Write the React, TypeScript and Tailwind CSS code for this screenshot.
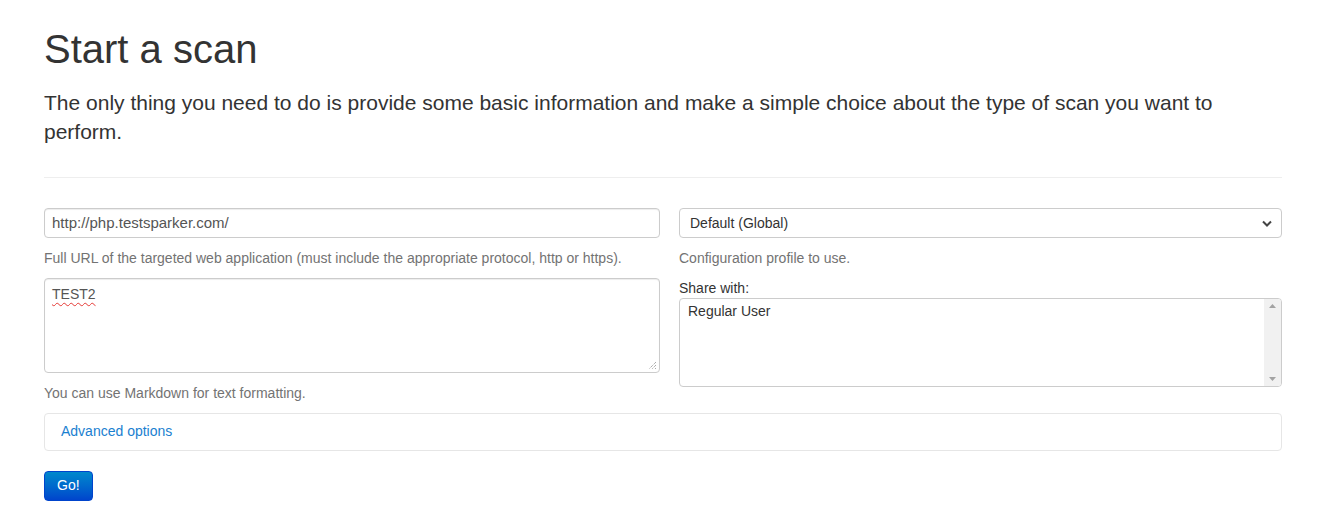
export default function App() {
  return (
    <div className="min-h-[505px] bg-white font-['Liberation_Sans',Arial,sans-serif] text-[#333]">
      <div className="w-[1238px] ml-[44px] pt-[27px]">
        <h1 className="text-[40px] leading-[1.1] font-normal">Start a scan</h1>
        <p className="mt-[17px] text-[21px] leading-[1.4] font-light">
          The only thing you need to do is provide some basic information and make a simple choice about the type of scan you want to perform.
        </p>
        <hr className="mt-[30px] border-0 border-t border-[#eee]" />

        <div className="mt-[30px] flex gap-[19px]">
          <div className="w-[616px]">
            <div className="h-[30px] flex items-center pt-[1px] px-[7px] border border-[#ccc] rounded-[4px] text-[15px] text-[#555] shadow-[inset_0_1px_1px_rgba(0,0,0,0.075)]">
              http://php.testsparker.com/
            </div>
            <p className="mt-[10px] text-[14px] leading-[20px] text-[#737373]">
              Full URL of the targeted web application (must include the appropriate protocol, http or https).
            </p>
            <div className="relative mt-[10px] h-[95px] px-[7px] pt-[5px] border border-[#ccc] rounded-[4px] text-[14px] leading-[20px] text-[#555] shadow-[inset_0_1px_1px_rgba(0,0,0,0.075)]">
              <span className="underline decoration-wavy decoration-[#e53935] decoration-1 underline-offset-[3px]">TEST2</span>
              <svg className="absolute right-[2px] bottom-[2px]" width="9" height="9" viewBox="0 0 9 9">
                <path d="M8 1L1 8M8 4L4 8M8 7L7 8" stroke="#888" strokeWidth="1" strokeDasharray="1 1" fill="none" />
              </svg>
            </div>
            <p className="mt-[10px] text-[14px] leading-[20px] text-[#737373]">
              You can use Markdown for text formatting.
            </p>
          </div>

          <div className="w-[603px]">
            <div className="h-[30px] flex items-center justify-between pt-[1px] pl-[10px] pr-[9px] border border-[#ccc] rounded-[4px] text-[14px] text-[#333]">
              <span>Default (Global)</span>
              <svg width="10" height="7" viewBox="0 0 10 7">
                <path d="M1 1.5L5 5.5L9 1.5" stroke="#444" strokeWidth="2" fill="none" />
              </svg>
            </div>
            <p className="mt-[10px] text-[14px] leading-[20px] text-[#737373]">
              Configuration profile to use.
            </p>
            <label className="block mt-[10px] text-[14px] leading-[20px] text-[#333]">Share with:</label>
            <div className="flex h-[89px] border border-[#ccc] rounded-[4px] overflow-hidden">
              <div className="flex-1 px-[8px] py-[2px] text-[14px] leading-[20px] text-[#333]">Regular User</div>
              <div className="w-[17px] bg-[#f1f1f1] flex flex-col items-center justify-between py-[5px]">
                <svg width="7" height="4" viewBox="0 0 7 4">
                  <path d="M0 4L3.5 0L7 4Z" fill="#a3a3a3" />
                </svg>
                <svg width="7" height="4" viewBox="0 0 7 4">
                  <path d="M0 0L3.5 4L7 0Z" fill="#a3a3a3" />
                </svg>
              </div>
            </div>
          </div>
        </div>

        <div className="mt-[10px] h-[38px] flex items-center px-[16px] border border-[#e6e6e6] rounded-[4px]">
          <a href="#" className="text-[14px] text-[#1a80d0]">Advanced options</a>
        </div>

        <button className="mt-[20px] h-[30px] px-[12px] rounded-[4px] border border-[#0044cc] bg-gradient-to-b from-[#0088cc] to-[#0044cc] text-[14px] text-white">
          Go!
        </button>
      </div>
    </div>
  );
}
